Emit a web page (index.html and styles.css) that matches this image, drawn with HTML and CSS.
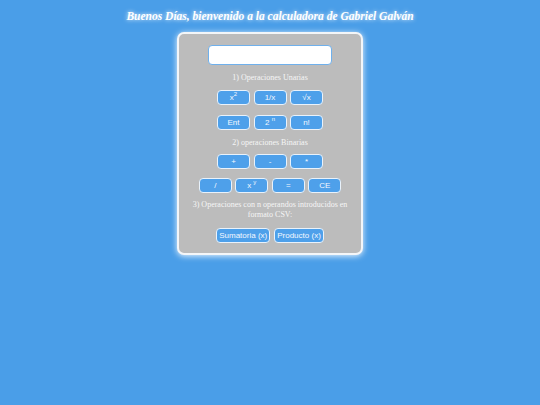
FILE: index.html
```html
<!DOCTYPE html>
<html lang="es">
<head>
<meta charset="utf-8">
<title>Calculadora</title>
<link rel="stylesheet" href="styles.css">
</head>
<body>
<h1 class="title">Buenos Días, bienvenido a la calculadora de Gabriel Galván</h1>
<div class="card">
  <input class="display" type="text">
  <p class="label l1">1) Operaciones Unarias</p>
  <div class="row r1">
    <button class="btn">x<sup>2</sup></button>
    <button class="btn">1/x</button>
    <button class="btn">√x</button>
  </div>
  <div class="row r2">
    <button class="btn">Ent</button>
    <button class="btn">2 <sup>n</sup></button>
    <button class="btn">n!</button>
  </div>
  <p class="label l2">2) operaciones Binarias</p>
  <div class="row r3">
    <button class="btn">+</button>
    <button class="btn">-</button>
    <button class="btn">*</button>
  </div>
  <div class="row r4">
    <button class="btn">/</button>
    <button class="btn">x <sup>y</sup></button>
    <button class="btn">=</button>
    <button class="btn">CE</button>
  </div>
  <p class="label l3">3) Operaciones con n operandos introducidos en formato CSV:</p>
  <div class="row r5">
    <button class="btn wide">Sumatoria (x)</button>
    <button class="btn wide">Producto (x)</button>
  </div>
</div>
</body>
</html>
```
FILE: styles.css
```css
html, body {
  margin: 0;
  padding: 0;
}
body {
  background: #4a9ee8;
  font-family: "Liberation Serif", "Times New Roman", serif;
  height: 405px;
  overflow: hidden;
}
.title {
  margin: 0;
  padding-top: 9px;
  font-size: 11.5px;
  line-height: 14px;
  font-weight: bold;
  font-style: italic;
  color: #ffffff;
  text-align: center;
  text-shadow: 0 0 4px rgba(255,255,255,0.9);
}
.card {
  width: 182px;
  margin: 9px auto 0;
  padding: 11px 0 10px;
  background: #bcbcbc;
  border: 2px solid #f4f6f8;
  border-radius: 7px;
  box-shadow: 0 1px 6px rgba(255,255,255,0.9);
  display: flex;
  flex-direction: column;
  align-items: center;
}
.display {
  box-sizing: border-box;
  width: 124px;
  height: 20px;
  margin: 0;
  padding: 0 4px;
  background: #ffffff;
  border: 1px solid #6fb0ec;
  border-radius: 4px;
  outline: none;
}
.label {
  margin: 7px 0 0;
  font-size: 8px;
  line-height: 11px;
  color: #f6f6f6;
  text-align: center;
}
.l3 {
  width: 162px;
  line-height: 10px;
}
.row {
  display: flex;
  justify-content: center;
  gap: 3.5px;
}
.r1 { margin-top: 7px; }
.r2 { margin-top: 10px; }
.r3 { margin-top: 6px; }
.r4 { margin-top: 9px; }
.r5 { margin-top: 8px; gap: 4px; }
.btn {
  box-sizing: border-box;
  width: 33px;
  height: 15px;
  margin: 0;
  padding: 0;
  background: #4ea0ea;
  border: 1.5px solid #e9f2fb;
  border-radius: 4px;
  color: #f4f8ff;
  font-family: "Liberation Sans", Arial, sans-serif;
  font-size: 8px;
  line-height: 12px;
}
.btn sup {
  font-size: 6px;
  line-height: 0;
  vertical-align: 4px;
}
.wide {
  width: auto;
  padding: 0 2px;
  font-size: 8px;
}
```
